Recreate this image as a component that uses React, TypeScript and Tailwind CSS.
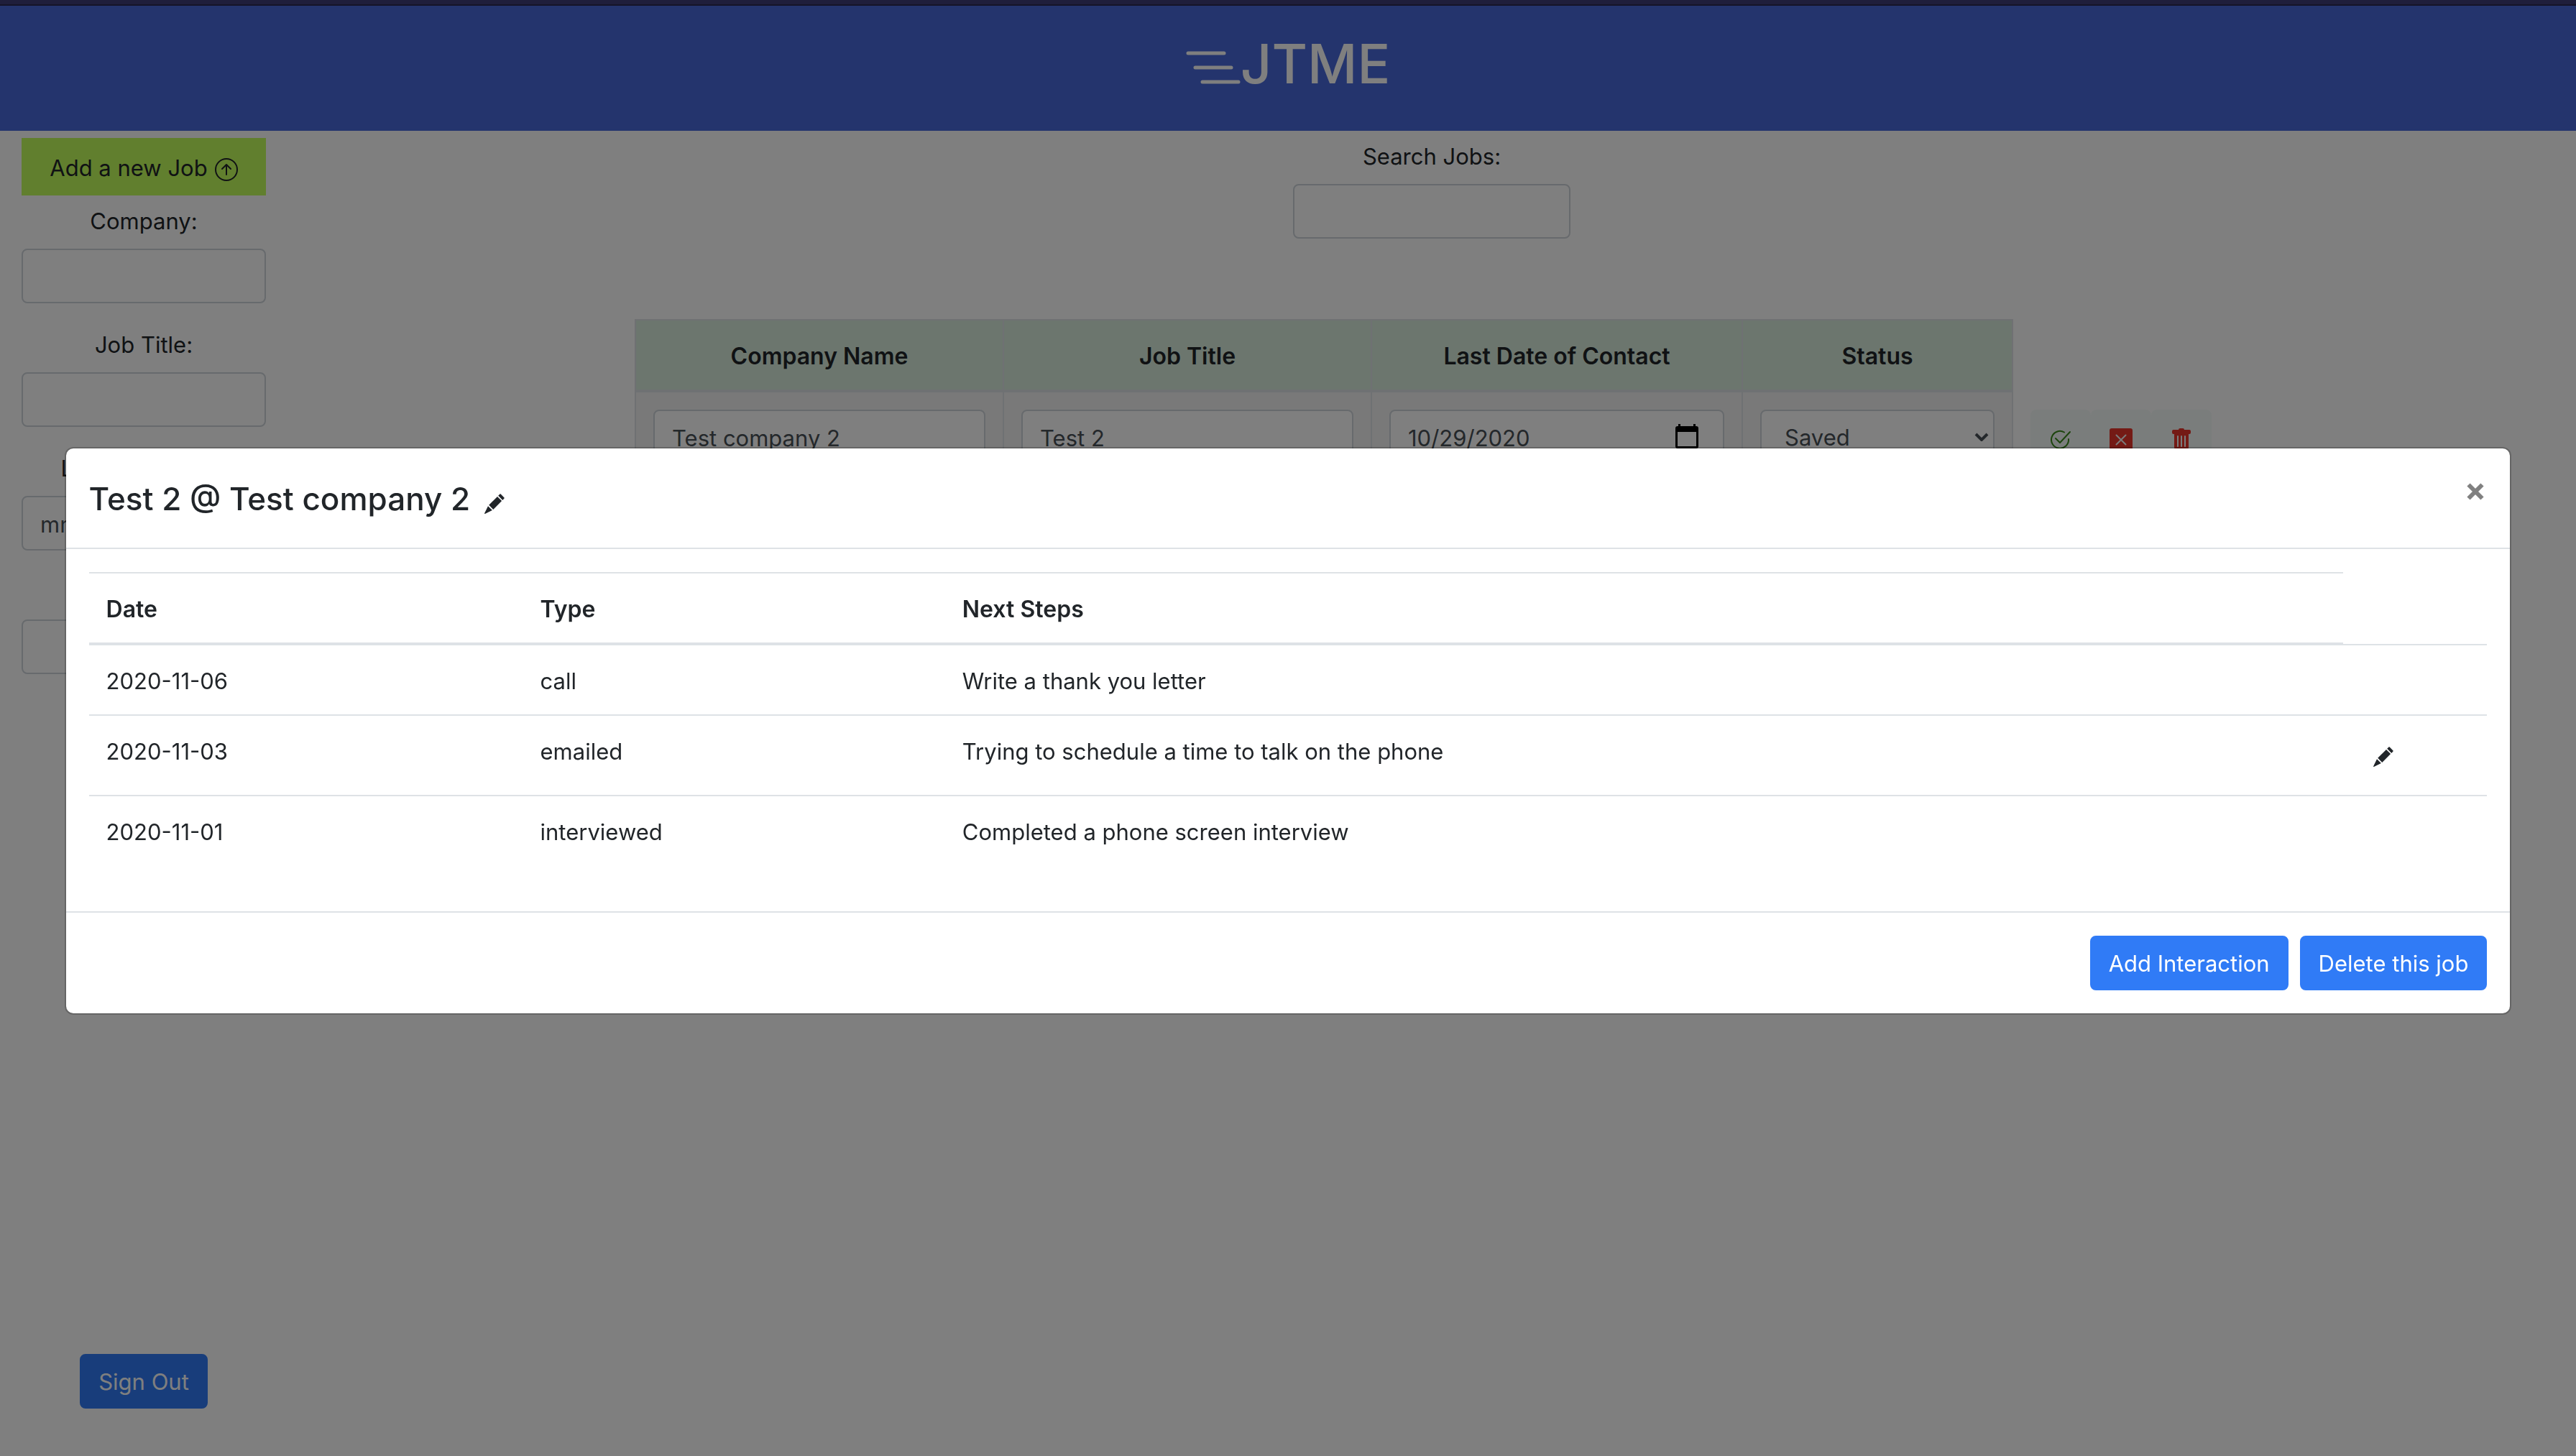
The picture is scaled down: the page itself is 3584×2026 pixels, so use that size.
import { useState } from 'react';

const control =
  'block h-[76px] w-full rounded-lg border-2 border-[#ced4da] bg-white px-6 pt-[2px] text-[#495057] outline-none placeholder:text-[#495057]';
const primary =
  'h-[76px] rounded-lg border-2 border-[#307bf6] bg-[#307bf6] px-6 pt-[2px] text-white';

function Pencil() {
  return (
    <svg viewBox="0 0 28 28" className="size-7" fill="currentColor" aria-hidden="true">
      <path d="M21.500.6q.6-.6 1.200 0L27.500 5.400q.6.6 0 1.200L25.300 8.900 19.200 2.800z" />
      <path d="M18 4 24.100 10.100 12.300 21.900 6.200 15.800z" />
      <path d="M5 17.200 10.900 23.100 .8 27.900Q0 28.100.1 27.300z" />
    </svg>
  );
}

function ArrowUpCircle() {
  return (
    <svg viewBox="0 0 32 32" className="mt-1 size-8" fill="none" stroke="currentColor" strokeWidth="2" strokeLinecap="round" strokeLinejoin="round" aria-hidden="true">
      <circle cx="16" cy="16" r="15" />
      <path d="M16 23V9M10 15l6-6 6 6" />
    </svg>
  );
}

function CheckCircle() {
  return (
    <svg viewBox="0 0 28 28" className="size-7 text-[#3a8a1c]" fill="none" stroke="currentColor" strokeWidth="2" strokeLinecap="round" strokeLinejoin="round" aria-hidden="true">
      <path d="M19 3.500A12 12 0 1 0 25 13" />
      <path d="M7 12l6 6L27 3" />
    </svg>
  );
}

function CrossSquare() {
  return (
    <svg viewBox="0 0 32 32" className="size-8" aria-hidden="true">
      <rect width="32" height="32" rx="3" fill="#e8352b" />
      <path d="M9.500 9.500l13 13M22.500 9.500l-13 13" stroke="#f4f4f4" strokeWidth="2" strokeLinecap="round" />
    </svg>
  );
}

function Trash() {
  return (
    <svg viewBox="0 0 32 32" className="size-8" fill="#e8352b" aria-hidden="true">
      <path fillRule="evenodd" d="M5 2a2 2 0 0 0-2 2v2a2 2 0 0 0 2 2h1v18a4 4 0 0 0 4 4h12a4 4 0 0 0 4-4V8h1a2 2 0 0 0 2-2V4a2 2 0 0 0-2-2h-7a2 2 0 0 0-2-2h-4a2 2 0 0 0-2 2zm6 8a1 1 0 0 1 1 1v14a1 1 0 0 1-2 0V11a1 1 0 0 1 1-1zm5 0a1 1 0 0 1 1 1v14a1 1 0 0 1-2 0V11a1 1 0 0 1 1-1zm5 0a1 1 0 0 1 1 1v14a1 1 0 0 1-2 0V11a1 1 0 0 1 1-1z" />
    </svg>
  );
}

function Calendar() {
  return (
    <svg viewBox="0 0 32 34" className="h-[34px] w-8" aria-hidden="true">
      <path fillRule="evenodd" fill="#000" d="M4 0h3v3h18V0h3v3h1a3 3 0 0 1 3 3v25a3 3 0 0 1-3 3H3a3 3 0 0 1-3-3V6a3 3 0 0 1 3-3h1zM3 11v20h26V11z" />
    </svg>
  );
}

function Chevron() {
  return (
    <svg viewBox="0 0 20 12" className="h-3 w-5" fill="none" stroke="#495057" strokeWidth="4" aria-hidden="true">
      <path d="M2 2l8 8 8-8" />
    </svg>
  );
}

const interactions = [
  { date: '2020-11-06', type: 'call', next: 'Write a thank you letter', editable: false },
  { date: '2020-11-03', type: 'emailed', next: 'Trying to schedule a time to talk on the phone', editable: true },
  { date: '2020-11-01', type: 'interviewed', next: 'Completed a phone screen interview', editable: false },
];

function Sidebar() {
  const label = 'mb-[14px] block pt-[2px]';
  return (
    <aside className="flex w-[400px] shrink-0 flex-col px-[30px] pt-[10px] pb-[66px]">
      <button type="button" className="flex h-20 w-full items-center justify-center gap-[10px] bg-[#c2fe5c] pt-1">
        Add a new Job
        <ArrowUpCircle />
      </button>
      <form className="mt-[10px] flex flex-col gap-8 text-center">
        <div>
          <label htmlFor="company" className={label}>Company:</label>
          <input id="company" className={control} />
        </div>
        <div>
          <label htmlFor="title" className={label}>Job Title:</label>
          <input id="title" className={control} />
        </div>
        <div>
          <label htmlFor="contact" className={label}>Last Contacted:</label>
          <input id="contact" placeholder="mm/dd/yyyy" className={control} />
        </div>
        <div className="pt-16">
          <select aria-label="Status" className={control + ' appearance-none'} defaultValue="">
            <option value=""></option>
            <option>Saved</option>
            <option>Applied</option>
          </select>
        </div>
      </form>
      <button type="button" className={primary + ' mt-auto self-center'}>Sign Out</button>
    </aside>
  );
}

function Jobs() {
  const head = 'border-2 border-b-4 border-[#dee2e6] bg-[#d8ecdc] px-6 pt-[26px] pb-[22px] text-[32px] font-semibold';
  const cell = 'border-2 border-t-0 border-[#dee2e6] bg-[#f2f2f2] p-6';
  const action = 'flex h-[84px] w-[84px] items-center justify-center rounded-lg bg-[#f4fbf9]';
  return (
    <section className="flex flex-1 flex-col items-center pt-[10px]">
      <label htmlFor="search" className="mb-[14px] pt-[2px]">Search Jobs:</label>
      <div className="w-[386px]">
        <input id="search" type="search" className={control} />
      </div>
      <table className="mt-28 border-separate border-spacing-0">
        <thead>
          <tr>
            <th className={head + ' w-[512px] border-r-0'}>Company Name</th>
            <th className={head + ' w-[512px] border-r-0'}>Job Title</th>
            <th className={head + ' w-[516px] border-r-0'}>Last Date of Contact</th>
            <th className={head + ' w-[378px]'}>Status</th>
            <td />
          </tr>
        </thead>
        <tbody className="align-top">
          <tr>
            <td className={cell + ' border-r-0'}>
              <input aria-label="Company name" defaultValue="Test company 2" className={control} />
            </td>
            <td className={cell + ' border-r-0'}>
              <input aria-label="Job title" defaultValue="Test 2" className={control} />
            </td>
            <td className={cell + ' border-r-0'}>
              <div className="relative">
                <input aria-label="Last date of contact" defaultValue="10/29/2020" className={control} />
                <span className="absolute top-5 right-9"><Calendar /></span>
              </div>
            </td>
            <td className={cell}>
              <div className="relative">
                <select aria-label="Status" defaultValue="Saved" className={control + ' appearance-none pl-8'}>
                  <option>Saved</option>
                  <option>Applied</option>
                </select>
                <span className="absolute top-8 right-2"><Chevron /></span>
              </div>
            </td>
            <td className="px-6 pt-6">
              <div className="flex">
                <button type="button" aria-label="Save" className={action}><CheckCircle /></button>
                <button type="button" aria-label="Cancel" className={action}><CrossSquare /></button>
                <button type="button" aria-label="Delete" className={action}><Trash /></button>
              </div>
            </td>
          </tr>
        </tbody>
      </table>
    </section>
  );
}

function JobModal({ onClose }: { onClose: () => void }) {
  const pad = 'px-6 pt-[26px] pb-[22px]';
  const head = pad + ' border-t-2 border-b-4 border-[#dee2e6] text-[32px] font-semibold';
  return (
    <div className="fixed inset-0 bg-black/50 pt-[622px]">
      <div role="dialog" aria-modal="true" aria-labelledby="job-title" className="mx-auto w-[95%] rounded-xl border-2 border-black/20 bg-white bg-clip-padding">
        <header className="flex h-[140px] items-start justify-between border-b-2 border-[#dee2e6] p-8">
          <div className="flex items-center gap-5">
            <h4 id="job-title" className="pt-[2px] text-[44px] leading-[72px] font-medium">Test 2 @ Test company 2</h4>
            <button type="button" aria-label="Edit job" className="mt-4"><Pencil /></button>
          </div>
          <button type="button" aria-label="Close" onClick={onClose} className="mt-4 mr-1">
            <svg viewBox="0 0 24 24" className="size-6" stroke="#808080" strokeWidth="6" aria-hidden="true">
              <path d="M2.500 2.500l19 19M21.500 2.500l-19 19" />
            </svg>
          </button>
        </header>
        <div className="p-8">
          <table className="mb-8 w-full border-separate border-spacing-0 text-left">
            <thead>
              <tr>
                <th className={head + ' w-[18.1%]'}>Date</th>
                <th className={head + ' w-[17.6%]'}>Type</th>
                <th className={head}>Next Steps</th>
                <td className="w-[6%] border-b-2 border-[#dee2e6]" />
              </tr>
            </thead>
            <tbody className="align-top">
              {interactions.map((row, i) => {
                const line = i === 0 ? pad : pad + ' border-t-2 border-[#dee2e6]';
                return (
                  <tr key={row.date}>
                    <td className={line}>{row.date}</td>
                    <td className={line}>{row.type}</td>
                    <td className={line}>{row.next}</td>
                    <td className={line}>
                      {row.editable && (
                        <button type="button" aria-label="Edit interaction" className="flex h-[62px] items-center px-[18px]">
                          <Pencil />
                        </button>
                      )}
                    </td>
                  </tr>
                );
              })}
            </tbody>
          </table>
        </div>
        <footer className="flex justify-end gap-4 border-t-2 border-[#dee2e6] p-8">
          <button type="button" className={primary}>Add Interaction</button>
          <button type="button" className={primary}>Delete this job</button>
        </footer>
      </div>
    </div>
  );
}

export default function App() {
  const [open, setOpen] = useState(true);
  return (
    <div className="flex min-h-screen flex-col bg-white font-[Inter,sans-serif] text-[31px] leading-[48px] text-[#212529]">
      <div className="h-2 border-b-2 border-[#2a2950] bg-[#3e3d76]" />
      <header className="flex h-[174px] items-start justify-center bg-[#4868da] pt-8 text-white">
        <a href="#" className="flex items-center" aria-label="JTME home">
          <svg viewBox="0 0 76 46" className="mt-3 h-[46px] w-[76px]" stroke="currentColor" strokeWidth="5" strokeLinecap="round" aria-hidden="true">
            <path d="M3 3h50M13 23h50M23 43h50" />
          </svg>
          <span className="text-[76px] leading-[96px] font-medium">JTME</span>
        </a>
      </header>
      <main className="flex flex-1">
        <Sidebar />
        <Jobs />
      </main>
      {open && <JobModal onClose={() => setOpen(false)} />}
    </div>
  );
}
